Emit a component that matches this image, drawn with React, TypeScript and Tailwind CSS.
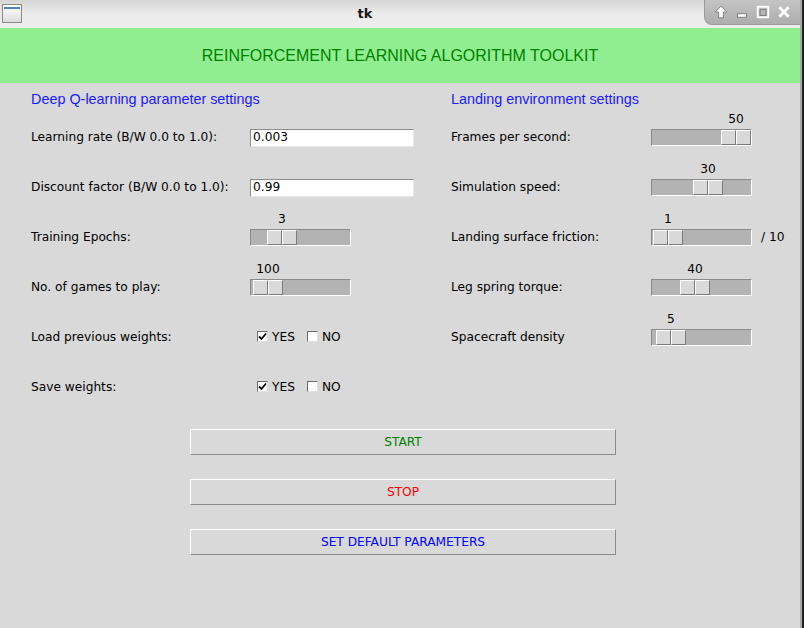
const font = "font-['DejaVu_Sans',sans-serif] text-[12.2px]";
const lbl = `${font} text-black`;

function Entry({ value }: { value: string }) {
  return (
    <div className="w-[164px] h-[18px] mt-[1px] bg-white border border-t-[#8c8c8c] border-l-[#8c8c8c] border-b-[#e8e8e8] border-r-[#e8e8e8] flex items-center pl-[2px]">
      <span className={lbl}>{value}</span>
    </div>
  );
}

function Scale({ value, at }: { value: string; at: number }) {
  return (
    <div className="relative w-[101px] h-[17px] bg-[#b3b3b3] border border-t-[#8a8a8a] border-l-[#8a8a8a] border-b-white border-r-white">
      <span
        className={`absolute bottom-[19px] -translate-x-1/2 leading-none ${lbl}`}
        style={{ left: at + 15 }}
      >
        {value}
      </span>
      <div className="absolute top-0 h-[15px] flex" style={{ left: at }}>
        <div className="w-[15px] h-[15px] bg-[#d9d9d9] border border-t-white border-l-white border-b-[#7a7a7a] border-r-[#7a7a7a]" />
        <div className="w-[15px] h-[15px] bg-[#d9d9d9] border border-t-white border-l-white border-b-[#7a7a7a] border-r-[#7a7a7a]" />
      </div>
    </div>
  );
}

function Check({ on, text }: { on: boolean; text: string }) {
  return (
    <div className="flex items-center gap-[4px]">
      <div className="w-[11px] h-[11px] bg-white border border-t-[#6a6a6a] border-l-[#6a6a6a] border-b-[#e0e0e0] border-r-[#e0e0e0] flex items-center justify-center">
        {on && (
          <svg width="9" height="9" viewBox="0 0 9 9">
            <path d="M1 4.5 L3.5 7 L8 1.5" stroke="black" strokeWidth="1.8" fill="none" />
          </svg>
        )}
      </div>
      <span className={lbl}>{text}</span>
    </div>
  );
}

function Row({ label, children, labelW }: { label: string; children?: React.ReactNode; labelW: string }) {
  return (
    <div className="h-[50px] flex items-center">
      <div className={`${labelW} ${lbl}`}>{label}</div>
      {children}
    </div>
  );
}

function Btn({ text, color }: { text: string; color: string }) {
  return (
    <div className={`w-[426px] h-[26px] flex items-center justify-center bg-[#d9d9d9] border border-t-white border-l-white border-b-[#8a8a8a] border-r-[#8a8a8a] ${font} ${color}`}>
      {text}
    </div>
  );
}

function TitleBar() {
  return (
    <div className="h-[28px] flex items-stretch bg-gradient-to-b from-[#d6d6d6] via-[#ececec] to-[#ececec]">
      <div className="w-[26px] flex items-start pt-[4px] pl-[2px]">
        <div className="w-[20px] h-[19px] border border-[#8a8a8a] bg-gradient-to-b from-white to-[#dcdcdc] p-[1px]">
          <div className="h-[2px] bg-[#5a7fb8] mt-[1px]" />
        </div>
      </div>
      <div className="flex-1 flex items-center justify-center">
        <span className="font-['DejaVu_Sans',sans-serif] text-[13px] font-bold text-[#1a1a1a]">tk</span>
      </div>
      <div className="w-[96px] h-[25px] rounded-bl-[8px] bg-gradient-to-b from-[#c4c4c4] to-[#adadad] border-l border-b border-[#9a9a9a] flex items-center justify-around px-[5px]">
        <svg width="14" height="14" viewBox="0 0 12 12">
          <path d="M6 1 L11 6 L8 6 L8 11 L4 11 L4 6 L1 6 Z" fill="white" stroke="#7a7a7a" strokeWidth="0.8" />
        </svg>
        <svg width="14" height="14" viewBox="0 0 12 12">
          <rect x="2" y="7.5" width="8" height="3" fill="white" stroke="#7a7a7a" strokeWidth="0.8" />
        </svg>
        <svg width="14" height="14" viewBox="0 0 12 12">
          <rect x="1.5" y="1.5" width="9" height="9" fill="none" stroke="white" strokeWidth="1.6" />
          <rect x="3.5" y="4" width="5" height="5" fill="none" stroke="#7a7a7a" strokeWidth="0.8" />
        </svg>
        <svg width="14" height="14" viewBox="0 0 12 12">
          <path d="M2 2 L10 10 M10 2 L2 10" stroke="white" strokeWidth="2.4" />
        </svg>
      </div>
    </div>
  );
}

export default function App() {
  return (
    <div className="w-[804px] h-[628px] flex bg-[#d9d9d9] overflow-hidden">
      <div className="w-[800px] flex flex-col">
        <TitleBar />
        <div className="h-[55px] bg-[#90ee90] flex items-center justify-center">
          <span className="font-['Liberation_Sans',sans-serif] text-[16px] text-[#008000]">
            REINFORCEMENT LEARNING ALGORITHM TOOLKIT
          </span>
        </div>

        <div className="flex pl-[31px]">
          {/* left column */}
          <div className="w-[420px] flex flex-col">
            <div className="h-[29px] pt-[7px] font-['Liberation_Sans',sans-serif] text-[14.4px] leading-[18px] text-[#1a1aff]">
              Deep Q-learning parameter settings
            </div>
            <Row label="Learning rate (B/W 0.0 to 1.0):" labelW="w-[219px]">
              <Entry value="0.003" />
            </Row>
            <Row label="Discount factor (B/W 0.0 to 1.0):" labelW="w-[219px]">
              <Entry value="0.99" />
            </Row>
            <Row label="Training Epochs:" labelW="w-[219px]">
              <Scale value="3" at={16} />
            </Row>
            <Row label="No. of games to play:" labelW="w-[219px]">
              <Scale value="100" at={2} />
            </Row>
            <Row label="Load previous weights:" labelW="w-[226px]">
              <div className="flex gap-[12px]">
                <Check on text="YES" />
                <Check on={false} text="NO" />
              </div>
            </Row>
            <Row label="Save weights:" labelW="w-[226px]">
              <div className="flex gap-[12px]">
                <Check on text="YES" />
                <Check on={false} text="NO" />
              </div>
            </Row>
          </div>

          {/* right column */}
          <div className="flex flex-col">
            <div className="h-[29px] pt-[7px] font-['Liberation_Sans',sans-serif] text-[14.4px] leading-[18px] text-[#1a1aff]">
              Landing environment settings
            </div>
            <Row label="Frames per second:" labelW="w-[200px]">
              <Scale value="50" at={69} />
            </Row>
            <Row label="Simulation speed:" labelW="w-[200px]">
              <Scale value="30" at={41} />
            </Row>
            <Row label="Landing surface friction:" labelW="w-[200px]">
              <Scale value="1" at={1} />
              <span className={`ml-[9px] ${lbl}`}>/ 10</span>
            </Row>
            <Row label="Leg spring torque:" labelW="w-[200px]">
              <Scale value="40" at={28} />
            </Row>
            <Row label="Spacecraft density" labelW="w-[200px]">
              <Scale value="5" at={4} />
            </Row>
          </div>
        </div>

        <div className="mt-[17px] pl-[190px] flex flex-col gap-[24px]">
          <Btn text="START" color="text-[#008000]" />
          <Btn text="STOP" color="text-[#ff0000]" />
          <Btn text="SET DEFAULT PARAMETERS" color="text-[#0000ff]" />
        </div>
      </div>
      <div className="w-[2px] bg-[#a8a8a8]" />
      <div className="w-[2px] bg-[#222222]" />
    </div>
  );
}
